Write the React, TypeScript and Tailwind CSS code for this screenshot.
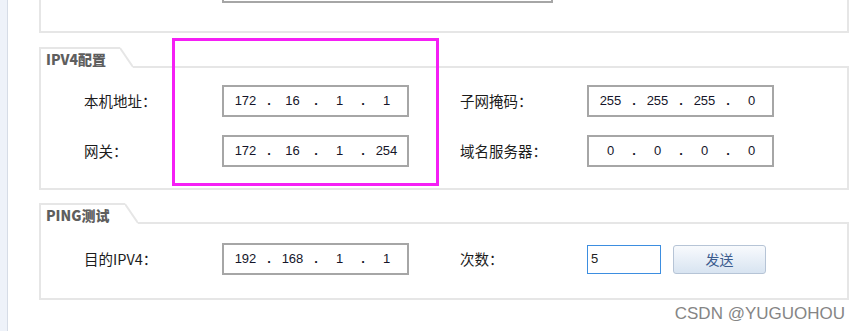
import React from 'react';

const IP_FONT = "font-['Liberation_Sans','DejaVu_Sans',sans-serif]";
const CJK_FONT = "font-['Noto_Sans_CJK_SC','Noto_Sans',sans-serif]";

// IP输入框：四段 + 点
function IpInput({ parts }: { parts: string[] }) {
  return (
    <div className={`flex items-center h-[32px] w-[187px] border-2 border-[#a6a6a6] bg-white pl-[1px] text-[13px] text-[#15152a] ${IP_FONT}`}>
      {parts.map((p, i) => (
        <React.Fragment key={i}>
          <span className="w-[41px] text-center">{p}</span>
          {i < 3 && <span className="w-[6px] text-center font-bold">.</span>}
        </React.Fragment>
      ))}
    </div>
  );
}

function Label({ text, w }: { text: string; w: string }) {
  return <div className={`${w} text-[14.5px] text-[#1c1c1c] ${CJK_FONT}`}>{text}</div>;
}

// 带斜角标签的分组框
function Group({ title, tabW, children, className }: { title: string; tabW: string; children: React.ReactNode; className?: string }) {
  return (
    <div className={className}>
      <div className="flex h-[21px]">
        <div className={`${tabW} border-t-2 border-l-2 border-[#e6e6e6] pl-[5px] pt-[1px] text-[14px] font-black leading-[18px] text-[#5e5e5e] ${CJK_FONT}`}>
          {title}
        </div>
        <svg width="13" height="21" className="shrink-0">
          <line x1="0" y1="1" x2="13" y2="20" stroke="#e6e6e6" strokeWidth="2" />
        </svg>
        <div className="flex-1 border-b-2 border-[#e6e6e6]" />
      </div>
      <div className="border-x-2 border-b-2 border-[#e6e6e6] pl-[43px]">{children}</div>
    </div>
  );
}

export default function App() {
  return (
    <div className="relative flex w-[860px] h-[331px] overflow-hidden bg-white">
      {/* 左侧边栏 */}
      <div className="w-[8px] shrink-0 bg-[#eef2f9] border-r border-[#d6dce6]" />

      <div className="ml-[31px] w-[810px] flex flex-col">
        {/* 上一个分组的底部 */}
        <div className="h-[33px] border-x-2 border-b-2 border-[#e6e6e6]">
          <div className="ml-[181px] w-[331px] h-[3px] border-x-2 border-b-2 border-[#a6a6a6]" />
        </div>

        <Group title="IPV4配置" tabW="w-[81px]" className="mt-[14px]">
          <div className="pt-[17px] pb-[21px] flex flex-col gap-[18px]">
            <div className="flex items-center h-[32px]">
              <Label text="本机地址：" w="w-[138px]" />
              <IpInput parts={['172', '16', '1', '1']} />
              <div className="ml-[51px]"><Label text="子网掩码：" w="w-[127px]" /></div>
              <IpInput parts={['255', '255', '255', '0']} />
            </div>
            <div className="flex items-center h-[32px]">
              <Label text="网关：" w="w-[138px]" />
              <IpInput parts={['172', '16', '1', '254']} />
              <div className="ml-[51px]"><Label text="域名服务器：" w="w-[127px]" /></div>
              <IpInput parts={['0', '0', '0', '0']} />
            </div>
          </div>
        </Group>

        <Group title="PING测试" tabW="w-[86px]" className="mt-[13px]">
          <div className="pt-[19px] pb-[23px]">
            <div className="flex items-center h-[32px]">
              <Label text="目的IPV4：" w="w-[138px]" />
              <IpInput parts={['192', '168', '1', '1']} />
              <div className="ml-[51px]"><Label text="次数：" w="w-[127px]" /></div>
              <div className={`flex items-center w-[74px] h-[29px] border border-[#3d8ee0] pl-[3px] text-[13px] text-[#222] ${IP_FONT}`}>5</div>
              <button className={`ml-[12px] w-[93px] h-[29px] rounded-[3px] border border-[#b6c4d6] bg-gradient-to-b from-[#f8fafd] to-[#d8e4f1] text-[14px] text-[#3b5c8e] ${CJK_FONT}`}>
                发送
              </button>
            </div>
          </div>
        </Group>

        <div className={`mt-[4px] pr-[4px] text-right text-[17px] leading-[20px] text-[#858585] ${IP_FONT}`}>CSDN @YUGUOHOU</div>
      </div>

      {/* 标注框 */}
      <div className="absolute left-[172px] top-[38px] w-[267px] h-[148px] border-[3px] border-[#f51ff5]" />
    </div>
  );
}
